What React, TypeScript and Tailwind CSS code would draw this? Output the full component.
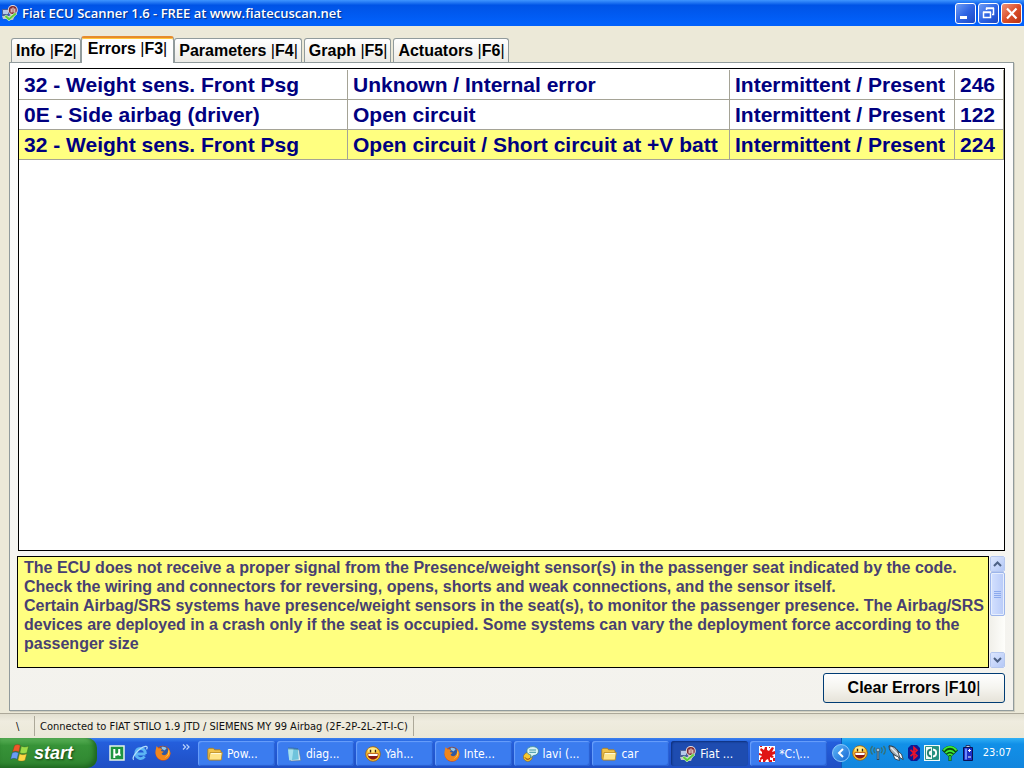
import { useState, type ReactNode } from "react";

type EcuError = {
  name: string;
  detail: string;
  status: string;
  code: number;
};

type IconProps = { className?: string };

const UI_FONT = "font-['DejaVu_Sans_Condensed','Noto_Sans',sans-serif]";

const tabs = [
  { label: "Info", hotkey: "F2" },
  { label: "Errors", hotkey: "F3" },
  { label: "Parameters", hotkey: "F4" },
  { label: "Graph", hotkey: "F5" },
  { label: "Actuators", hotkey: "F6" },
];

const errors: EcuError[] = [
  {
    name: "32 - Weight sens. Front Psg",
    detail: "Unknown / Internal error",
    status: "Intermittent / Present",
    code: 246,
  },
  {
    name: "0E - Side airbag (driver)",
    detail: "Open circuit",
    status: "Intermittent / Present",
    code: 122,
  },
  {
    name: "32 - Weight sens. Front Psg",
    detail: "Open circuit / Short circuit at +V batt",
    status: "Intermittent / Present",
    code: 224,
  },
];

const ScannerIcon = ({ className = "size-4" }: IconProps) => (
  <svg viewBox="0 0 16 16" className={className} aria-hidden="true">
    <path d="M0 4h7v7H0z" fill="#4a5f9a" />
    <path d="M1 5h5v4H1z" fill="#b4c8ea" />
    <path d="M0 11h9v3H1z" fill="#c4c4cc" />
    <path d="M8 8h6l-3 7H7z" fill="#b8b8bc" />
    <circle cx="10.8" cy="5" r="5" fill="#e8dcdc" />
    <circle cx="10.8" cy="5" r="4" fill="#7d2830" />
    <path d="M8.6 7.400V3.500h1.200v3.900M10.400 7.400V2.600h1.200v4.800M12.200 7.400V3.500h1.200v3.900" fill="#f3d9d9" />
    <path d="M2 11.500 4.500 10l2.500 2.500 6-5L15 9l-8 7z" fill="#5fce3c" stroke="#e9f9e0" strokeWidth=".6" />
  </svg>
);

const FolderIcon = ({ className = "size-4" }: IconProps) => (
  <svg viewBox="0 0 16 16" className={className} aria-hidden="true">
    <path d="M.8 3.500 2 2.300h4.500l1 1.500H13l1 1v9H2L.8 12.500z" fill="#f0c24a" stroke="#a8781c" strokeWidth=".8" />
    <path d="M3 6.500h12.300L14.200 14H1.800z" fill="#ffe488" stroke="#b98a26" strokeWidth=".8" />
    <path d="M4 7.600h10" stroke="#fffbe0" />
  </svg>
);

const NotepadIcon = ({ className = "size-4" }: IconProps) => (
  <svg viewBox="0 0 16 16" className={className} aria-hidden="true">
    <path d="M3.500 3l9.500.8 1.800 10.700L4.500 15z" fill="#e8eef2" stroke="#53758c" strokeWidth=".6" />
    <path d="M2 2.500 12 3l.8 10.600-9.600.7z" fill="#6fc3dc" />
    <path d="M2 2.500 7.500 2.800 6 14l-2.800.3z" fill="#a5e0ee" />
    <path d="M3 1.500v2M5 1.500v2M7 1.600v2M9 1.800v2M11 2v2" stroke="#28566e" strokeWidth=".8" />
  </svg>
);

const SmileyIcon = ({ className = "size-4" }: IconProps) => (
  <svg viewBox="0 0 16 16" className={className} aria-hidden="true">
    <circle cx="8" cy="8" r="7.300" fill="#fbc433" stroke="#9a5a0c" strokeWidth=".8" />
    <ellipse cx="7.500" cy="4" rx="4.800" ry="2.600" fill="#ffe98a" />
    <path d="M5.500 3.800v2.700M10.500 3.800v2.700" stroke="#3a2408" strokeWidth="1.400" />
    <path d="M2.500 7.500h11c0 3.700-2.300 6-5.500 6s-5.500-2.300-5.500-6z" fill="#8b1a14" />
    <path d="M3.200 8h9.600l-.4 2H3.600z" fill="#fff" />
  </svg>
);

const FirefoxIcon = ({ className = "size-4" }: IconProps) => (
  <svg viewBox="0 0 16 16" className={className} aria-hidden="true">
    <circle cx="8" cy="8.200" r="7.500" fill="#d24c10" />
    <circle cx="8.500" cy="6" r="4.800" fill="#2f59a3" />
    <path d="M6.500 2c2-.8 4.500 0 5 1.500L9.500 5.500 7 4z" fill="#8fc4ea" />
    <path
      d="M.8 4.500 1.600 1l2 2.500c1.200-.6 2.700-.4 3.500.5L5.800 6l3 .8-2.200 1.700c.5 2 3.200 2.200 4.800.8 1.700-1.400 2-3.600 1.200-6.500 3 2.500 3.600 6.500 1.200 9.700-2.800 3.500-8.800 3.500-11.600-.2C.5 9.800.1 7 .8 4.500z"
      fill="#f0861d"
    />
    <path d="M14.200 5.500c.5 3.500-1.200 6.500-4.700 7.300 2.900-1.700 4.200-4 3.800-7.300z" fill="#ffd34c" />
  </svg>
);

const ChatIcon = ({ className = "size-4" }: IconProps) => (
  <svg viewBox="0 0 16 16" className={className} aria-hidden="true">
    <circle cx="4.800" cy="11" r="4.400" fill="#f7c930" stroke="#8b6416" strokeWidth=".6" />
    <path d="M2 11.500c1.500 2.300 4 2.300 5.500.2" fill="none" stroke="#7c2a12" />
    <path
      d="M9.500.6c3.200 0 6 1.700 6 4.500S13 9.500 10.500 9.500l-3 2.300.4-2.800C5.500 8.500 3.800 7 3.800 5 3.800 2.300 6.400.6 9.500.6z"
      fill="#d8f3f4"
      stroke="#31818f"
      strokeWidth=".8"
    />
    <path d="M6.300 4h6.700M6.300 6.300h6.700" stroke="#3a93a5" />
  </svg>
);

const SplatIcon = ({ className = "size-4" }: IconProps) => (
  <svg viewBox="0 0 16 16" className={className} aria-hidden="true">
    <path d="M0 0h16v16H0z" fill="#fff" />
    <path
      d="M6 1h2v3l2 1 3-4 2 1-2 4 3-1v3l-3 1 2 2-2 1-2-1v3h2v2h-3l-1-3-2 1-1 2H4v-3l-3 1v-2l2-2-3-1V7l3 1V6L1 4l1-2 3 2z"
      fill="#e01414"
    />
    <path d="M1 0h2v1H1zM10 1h1v1h-1zM14 12h2v3h-2zM0 14h2v2H0z" fill="#e01414" />
  </svg>
);

const WindowsFlag = () => (
  <svg viewBox="0 0 20 18" className="h-[18px] w-5" aria-hidden="true">
    <path d="M4.500 1.500c2.300-1.300 4-1.200 5.800 0L8.800 8c-2-1.200-4-1.200-6.300 0z" fill="#f0582a" stroke="#7a3415" strokeWidth=".4" />
    <path d="M11.400 2c2 1.200 4.500 1.200 7.200 0L17 8.700c-2.500 1.200-5 1.200-7.200 0z" fill="#9bdc48" stroke="#2a5c1b" strokeWidth=".4" />
    <path d="M2.200 9c2.200-1.200 4.200-1.200 6.300 0L7 15.300c-2-1.300-4.200-1.200-6.400 0z" fill="#6a9df5" stroke="#20408c" strokeWidth=".4" />
    <path d="M9.500 9.800c2.200 1.200 4.700 1.200 7.200 0L15 16.200c-2.400 1.200-4.900 1.200-7.100 0z" fill="#fdd644" stroke="#7d6412" strokeWidth=".4" />
  </svg>
);

const TorrentIcon = () => (
  <svg viewBox="0 0 16 16" className="size-4" aria-hidden="true">
    <path d="M1 1h14v14H1z" fill="#1d9440" stroke="#e5f3e7" strokeWidth="1.500" />
    <path
      d="M5.300 13V4M5.300 8.500c.4 1.700 3.800 1.700 4.700-.4M10.200 4v5c0 .8.500 1 1.500.7"
      fill="none"
      stroke="#fff"
      strokeWidth="2"
    />
  </svg>
);

const ExplorerIcon = () => (
  <svg viewBox="0 0 16 16" className="size-4" aria-hidden="true">
    <path
      d="M13.500 9H3.800C3.800 5.500 5.800 3.500 8.500 3.500S13.200 5.500 13.500 9M3.800 9c.4 4.800 6.200 6 8.800 2.500"
      fill="none"
      stroke="#5cb5f4"
      strokeWidth="2.800"
    />
    <path d="M1.700 14.800C-.8 12.500 6.500 3 13.500 1.400c2-.3 2 1.300 1 3" fill="none" stroke="#b5e0fb" strokeWidth="1.200" />
  </svg>
);

const AntennaIcon = () => (
  <svg viewBox="0 0 16 16" className="size-4" aria-hidden="true">
    <path d="M8 5v10" stroke="#2c4152" strokeWidth="2.400" />
    <path d="M8 5v9" stroke="#7fb0c9" />
    <circle cx="8" cy="5" r="1.800" fill="#a9c6d4" stroke="#2c4152" strokeWidth=".6" />
    <path
      d="M5 2.500c-1.500 1.500-1.500 4 0 5.500M11 2.500c1.500 1.500 1.500 4 0 5.500M2.500 1C.2 3.500.2 7 2.500 9.500M13.500 1c2.300 2.500 2.300 6 0 8.500"
      fill="none"
      stroke="#36706f"
      strokeWidth="1.400"
    />
  </svg>
);

const RocketIcon = () => (
  <svg viewBox="0 0 16 16" className="size-4" aria-hidden="true">
    <path d="M1 .8c4.500 0 7 2.200 9 5.200l3.500 5-2.500 2.500L6.500 10C3 7.500 1 5 1 .8z" fill="#a3adb5" stroke="#26323c" />
    <path d="M3 2.500 10.500 10" stroke="#e6ecef" strokeWidth="1.400" />
    <path d="M9.800 6.500 13.500 9l1.700 5.500-3.400-2zM5 9.500 7 14l4.500 1.500-1-3.500z" fill="#f6f9fb" stroke="#26323c" strokeWidth=".8" />
  </svg>
);

const BluetoothIcon = () => (
  <svg viewBox="0 0 16 16" className="size-4" aria-hidden="true">
    <path d="M5 0h6l3 3v10l-3 3H5l-3-3V3z" fill="#0b1a96" />
    <path d="M4.500 4.800 11 10.800 8 13.500v-11L11 5.200 4.500 11.200" fill="none" stroke="#e8122c" strokeWidth="1.700" />
  </svg>
);

const SyncIcon = () => (
  <svg viewBox="0 0 16 16" className="size-4" aria-hidden="true">
    <path d="M0 0h16v16H0z" fill="#f2faf8" />
    <path d="M8 2h6v12H8z" fill="#23907f" />
    <path d="M1.500 1.500h13v13h-13z" fill="none" stroke="#2b9686" />
    <path d="M7 4.500C2.800 4.800 2.800 11.200 7 11.500" fill="none" stroke="#23806f" strokeWidth="1.800" />
    <path d="M9 4.500c4.200.3 4.200 6.700 0 7" fill="none" stroke="#fff" strokeWidth="1.800" />
  </svg>
);

const WirelessIcon = () => (
  <svg viewBox="0 0 16 16" className="size-4" aria-hidden="true">
    <path d="M6.500 16v-4.500L0 5.500C3.500-.8 12.500-.8 16 5.500l-6.500 6V16z" fill="#0a4a0c" />
    <path
      d="M1.500 5.500c3.500-4.800 9.500-4.800 13 0M3.600 8c2.300-3 6.500-3 8.800 0M5.600 10.300c1.300-1.600 3.500-1.600 4.800 0"
      fill="none"
      stroke="#3cea36"
      strokeWidth="1.900"
    />
    <path d="M7.300 11h1.400v4.500H7.300z" fill="#3cea36" />
  </svg>
);

const BatteryIcon = () => (
  <svg viewBox="0 0 16 16" className="size-4" aria-hidden="true">
    <path d="M6 .5h4v2H6z" fill="#c5ccd8" stroke="#111a55" strokeWidth=".8" />
    <path d="M3.500 2.500h9v13h-9z" fill="#1e2fc4" stroke="#0a1152" />
    <path d="M5 3.500h2v11H5z" fill="#6d8bff" />
    <path d="M8 5.500h3M9.500 4v3M8 12h3" stroke="#fff" />
  </svg>
);

type TitleButtonProps = { label: string; danger?: boolean; children: ReactNode };

const TitleButton = ({ label, danger, children }: TitleButtonProps) => (
  <button
    type="button"
    aria-label={label}
    className={`flex size-[21px] items-center justify-center rounded-[3px] border border-white bg-linear-to-br ${
      danger ? "from-[#ee9277] via-[#dc4f29] to-[#b93311]" : "from-[#6f9cf4] via-[#2f65e4] to-[#1c48c4]"
    }`}
  >
    <svg viewBox="0 0 19 19" className="size-[19px]" fill="none" stroke="#fff" aria-hidden="true">
      {children}
    </svg>
  </button>
);

const TitleBar = () => (
  <header className="flex h-[26px] items-center justify-between bg-linear-to-b from-[#3f95ff] from-0% via-[#0053e6] via-20% to-[#0261fb] to-90% px-[2px]">
    <div className="flex items-center gap-1">
      <ScannerIcon />
      <h1 className="font-['Open_Sans','Noto_Sans',sans-serif] text-[13px] leading-4 font-semibold text-white [text-shadow:1px_1px_1px_#0a2a7c]">
        Fiat ECU Scanner 1.6 - FREE at www.fiatecuscan.net
      </h1>
    </div>
    <div className="flex gap-[2px]">
      <TitleButton label="Minimize">
        <path d="M4 13.500h7" strokeWidth="3" />
      </TitleButton>
      <TitleButton label="Restore">
        <path d="M4.500 8.500h7v5h-7zM4 8h8" strokeWidth="1.500" />
        <path d="M7.500 6V4.500h7v6H13M7 4h8" strokeWidth="1.500" />
      </TitleButton>
      <TitleButton label="Close" danger>
        <path d="M5 4.500l9.500 10M14.500 4.500 5 14.500" strokeWidth="2.200" />
      </TitleButton>
    </div>
  </header>
);

const HotkeyLabel = ({ label, hotkey }: { label: string; hotkey: string }) => (
  <>
    {label} <span className="font-normal">|</span>
    {hotkey}
    <span className="font-normal">|</span>
  </>
);

type TabStripProps = { active: number; onSelect: (index: number) => void };

const TabStrip = ({ active, onSelect }: TabStripProps) => (
  <div role="tablist" className="flex items-end pt-[10px] pl-[11px]">
    {tabs.map((tab, i) => (
      <button
        key={tab.label}
        type="button"
        role="tab"
        aria-selected={i === active}
        onClick={() => onSelect(i)}
        className={`rounded-t-[3px] border border-b-0 border-[#919b9c] leading-[18px] whitespace-nowrap ${
          i === active
            ? "relative -mb-px h-[27px] border-t-2 border-t-[#e68b2c] bg-[#fefefe] px-[6px] pb-1 shadow-[inset_0_1px_0_#ffc73c]"
            : "h-6 bg-linear-to-b from-white to-[#ecebe6] pr-[3px] pl-1"
        } ${i > active + 1 ? "ml-[2px]" : ""}`}
      >
        <HotkeyLabel {...tab} />
      </button>
    ))}
  </div>
);

type ErrorTableProps = { selected: number; onSelect: (index: number) => void };

const ErrorTable = ({ selected, onSelect }: ErrorTableProps) => (
  <div className="ml-px flex-1 border border-black bg-white pt-px">
    <table className="w-full table-fixed border-separate border-spacing-0 text-[21px] leading-[29px] text-[#000080]">
      <colgroup>
        <col className="w-[329px]" />
        <col />
        <col className="w-[225px]" />
        <col className="w-[49px]" />
      </colgroup>
      <tbody className="[&_td]:overflow-hidden [&_td]:border-r [&_td]:border-b [&_td]:border-[#a5a396] [&_td]:pl-[5px] [&_td]:whitespace-nowrap">
        {errors.map((err, i) => (
          <tr
            key={i}
            aria-selected={i === selected}
            onClick={() => onSelect(i)}
            className={i === selected ? "bg-[#ffff80]" : "bg-white"}
          >
            <td>{err.name}</td>
            <td>{err.detail}</td>
            <td>{err.status}</td>
            <td>{err.code}</td>
          </tr>
        ))}
      </tbody>
    </table>
  </div>
);

const ScrollArrow = ({ down }: { down?: boolean }) => (
  <button
    type="button"
    aria-label={down ? "Scroll down" : "Scroll up"}
    className="flex h-4 w-full items-center justify-center rounded-[2px] border border-white bg-linear-to-br from-[#dce6fe] to-[#b4c8f6] outline-1 -outline-offset-1 outline-[#b5c7ee]"
  >
    <svg viewBox="0 0 9 6" className="h-[6px] w-[9px]" fill="none" stroke="#4d6185" strokeWidth="2" aria-hidden="true">
      <path d={down ? "M1 1l3.500 3.500L8 1" : "M1 5l3.500-3.500L8 5"} />
    </svg>
  </button>
);

const DescriptionBox = () => (
  <div className="flex gap-px">
    <div className="min-h-28 flex-1 border border-black bg-[#ffff80] pt-px pl-[6px] leading-[19px] text-[#483f72]">
      <p>
        The ECU does not receive a proper signal from the Presence/weight sensor(s) in the passenger seat indicated by
        the code.
      </p>
      <p>Check the wiring and connectors for reversing, opens, shorts and weak connections, and the sensor itself.</p>
      <p>
        Certain Airbag/SRS systems have presence/weight sensors in the seat(s), to monitor the passenger presence. The
        Airbag/SRS devices are deployed in a crash only if the seat is occupied. Some systems can vary the deployment
        force according to the passenger size
      </p>
    </div>
    <div className="flex w-[15px] flex-col bg-linear-to-r from-[#f1f0ea] to-[#fefefb]">
      <ScrollArrow />
      <div className="flex h-11 flex-col items-center justify-center gap-px rounded-[2px] border border-[#9db5ea] bg-linear-to-r from-[#d3e0fe] to-[#b9cbf8] shadow-[inset_0_0_0_1px_#e6eefd]">
        <span className="h-px w-[7px] bg-[#8caaed]" />
        <span className="h-px w-[7px] bg-[#8caaed]" />
        <span className="h-px w-[7px] bg-[#8caaed]" />
        <span className="h-px w-[7px] bg-[#8caaed]" />
      </div>
      <div className="flex-1" />
      <ScrollArrow down />
    </div>
  </div>
);

const StatusBar = () => (
  <div
    className={`mt-[2px] flex h-[25px] items-center border-t border-[#aca899] bg-linear-to-b from-[#e2dfd0] via-[#efecdf] via-30% to-[#ebe8d8] text-[11px] text-[#111] ${UI_FONT}`}
  >
    <span className="w-[35px] border-r border-[#aca899] pt-[2px] pl-4 leading-[18px]">\</span>
    <span className="border-r border-[#aca899] px-[5px] pt-[2px] leading-[18px] whitespace-nowrap">
      Connected to FIAT STILO 1.9 JTD / SIEMENS MY 99 Airbag (2F-2P-2L-2T-I-C)
    </span>
  </div>
);

const tasks = [
  { label: "Pow...", icon: <FolderIcon /> },
  { label: "diag...", icon: <NotepadIcon /> },
  { label: "Yah...", icon: <SmileyIcon /> },
  { label: "Inte...", icon: <FirefoxIcon /> },
  { label: "lavi (...", icon: <ChatIcon /> },
  { label: "car", icon: <FolderIcon /> },
  { label: "Fiat ...", icon: <ScannerIcon />, active: true },
  { label: "*C:\\...", icon: <SplatIcon /> },
];

const Taskbar = () => (
  <footer
    className={`flex h-[30px] items-stretch bg-linear-to-b from-[#3a80f0] from-0% via-[#245edc] via-15% to-[#1f4fc4] text-xs text-white ${UI_FONT}`}
  >
    <button
      type="button"
      className="flex w-[97px] items-center gap-1 rounded-r-[10px] bg-linear-to-b from-[#5cb45a] from-0% via-[#379338] via-25% to-[#2f8530] pl-[10px] font-['Liberation_Sans',Arial,sans-serif] text-lg leading-5 font-bold italic shadow-[inset_-3px_-2px_5px_#1d641f] [text-shadow:1px_1px_2px_#16420f]"
    >
      <WindowsFlag />
      start
    </button>
    <div className="flex w-[101px] shrink-0 items-center gap-[7px] pl-3">
      <button type="button" aria-label="µTorrent">
        <TorrentIcon />
      </button>
      <button type="button" aria-label="Internet Explorer">
        <ExplorerIcon />
      </button>
      <button type="button" aria-label="Firefox">
        <FirefoxIcon />
      </button>
      <button type="button" aria-label="More" className="self-start pt-[6px] pl-1">
        <svg viewBox="0 0 8 6" className="h-[6px] w-2" fill="none" stroke="#b9d2fb" strokeWidth="1.200" aria-hidden="true">
          <path d="M1 .5 3.500 3 1 5.500M4.500.5 7 3 4.500 5.500" />
        </svg>
      </button>
    </div>
    <div className="flex min-w-0 flex-1 gap-[2px] pt-[3px] pb-[2px]">
      {tasks.map((task) => (
        <button
          key={task.label}
          type="button"
          className={`flex min-w-0 max-w-40 flex-1 items-center gap-1 rounded-[3px] pl-[9px] whitespace-nowrap ${
            task.active
              ? "bg-[#1e4cb0] shadow-[inset_1px_1px_2px_#0d2f7c]"
              : "bg-[#3b7cef] shadow-[inset_1px_1px_1px_#6ba0fb,inset_-1px_-1px_1px_#2a5fd0]"
          }`}
        >
          <span className="shrink-0">{task.icon}</span>
          {task.label}
        </button>
      ))}
    </div>
    <div className="ml-[14px] flex w-[183px] shrink-0 items-center gap-[2px] border-l border-[#0c59b9] bg-linear-to-b from-[#2fb0f5] from-0% via-[#1190e8] via-20% to-[#1285dd]">
      <button
        type="button"
        aria-label="Show hidden icons"
        className="-ml-[10px] flex size-[18px] items-center justify-center rounded-full border border-[#8cc8fa] bg-linear-to-br from-[#5eb6f8] to-[#1566d2]"
      >
        <svg viewBox="0 0 8 10" className="h-[10px] w-2" fill="none" stroke="#fff" strokeWidth="2" aria-hidden="true">
          <path d="M6 1 2 5l4 4" />
        </svg>
      </button>
      <SmileyIcon />
      <AntennaIcon />
      <RocketIcon />
      <BluetoothIcon />
      <SyncIcon />
      <WirelessIcon />
      <BatteryIcon />
      <time className="flex-1 pr-2 text-center text-[11px] leading-4">23:07</time>
    </div>
  </footer>
);

const App = () => {
  const [activeTab, setActiveTab] = useState(1);
  const [selectedRow, setSelectedRow] = useState(2);

  return (
    <div className="flex min-h-screen flex-col bg-[#ece9d8] font-['Liberation_Sans',Arial,sans-serif] text-base text-black">
      <TitleBar />
      <main className="flex flex-1 flex-col font-bold">
        <TabStrip active={activeTab} onSelect={setActiveTab} />
        <section className="mr-[10px] ml-[9px] flex flex-1 flex-col gap-[5px] border border-[#919b9c] bg-linear-to-b from-[#fefefe] to-[#f3f2ed] pt-[5px] pr-2 pb-[7px] pl-[7px] shadow-[1px_1px_0_#d0cebf]">
          <ErrorTable selected={selectedRow} onSelect={setSelectedRow} />
          <DescriptionBox />
          <button
            type="button"
            className="h-[30px] w-[182px] self-end rounded-[3px] border border-[#003c74] bg-linear-to-b from-white via-[#f5f4ef] to-[#e6e3d9] leading-[18px]"
          >
            <HotkeyLabel label="Clear Errors" hotkey="F10" />
          </button>
        </section>
      </main>
      <StatusBar />
      <Taskbar />
    </div>
  );
};

export default App;
